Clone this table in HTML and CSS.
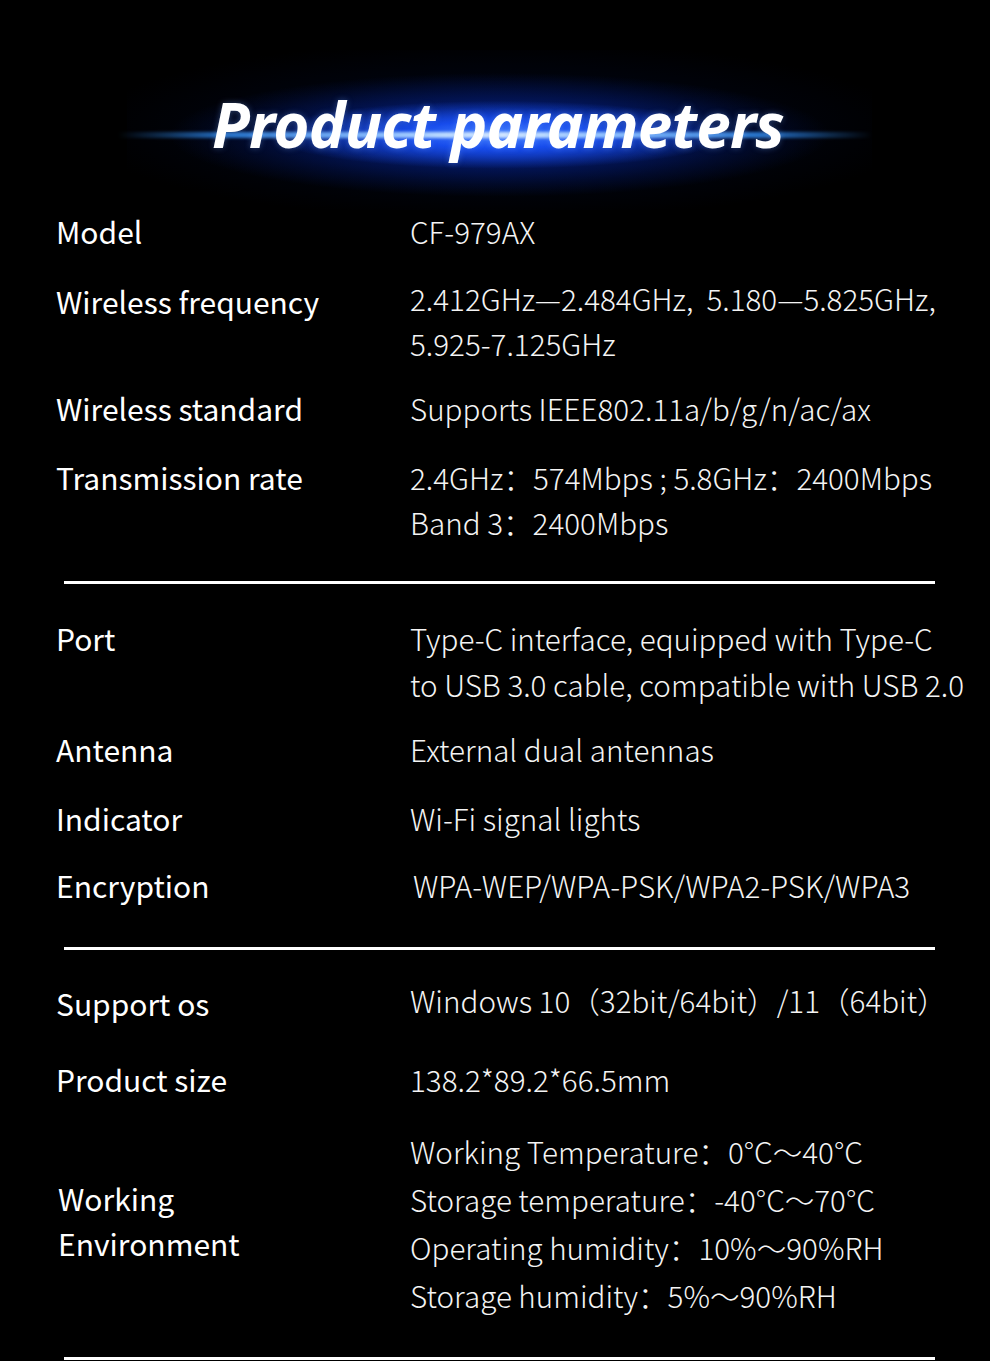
FILE: index.html
```html
<!DOCTYPE html>
<html lang="en">
<head>
<meta charset="utf-8">
<title>Product parameters</title>
<link rel="stylesheet" href="styles.css">
</head>
<body>
<div class="page">
  <header class="hero">
    <div class="hero-halo"></div>
    <div class="hero-streak"></div>
    <h1 class="hero-title">Product parameters</h1>
  </header>

  <section class="group group-1">
    <div class="row"><div class="label">Model</div><div class="value">CF-979AX</div></div>
    <div class="row row-freq"><div class="label">Wireless frequency</div><div class="value">2.412GHz—2.484GHz,&nbsp; 5.180—5.825GHz,<br>5.925-7.125GHz</div></div>
    <div class="row row-std"><div class="label">Wireless standard</div><div class="value">Supports IEEE802.11a/b/g/n/ac/ax</div></div>
    <div class="row row-rate"><div class="label">Transmission rate</div><div class="value">2.4GHz：574Mbps ; 5.8GHz：2400Mbps<br>Band 3：2400Mbps</div></div>
  </section>
  <div class="rule"></div>

  <section class="group group-2">
    <div class="row"><div class="label">Port</div><div class="value value-tall">Type-C interface, equipped with Type-C<br>to USB 3.0 cable, compatible with USB 2.0</div></div>
    <div class="row row-ant"><div class="label">Antenna</div><div class="value">External dual antennas</div></div>
    <div class="row row-ind"><div class="label">Indicator</div><div class="value">Wi-Fi signal lights</div></div>
    <div class="row"><div class="label">Encryption</div><div class="value value-enc">WPA-WEP/WPA-PSK/WPA2-PSK/WPA3</div></div>
  </section>
  <div class="rule"></div>

  <section class="group group-3">
    <div class="row"><div class="label label-down">Support os</div><div class="value">Windows 10（32bit/64bit）/11（64bit）</div></div>
    <div class="row"><div class="label">Product size</div><div class="value">138.2*89.2*66.5mm</div></div>
    <div class="row row-env"><div class="label">Working<br>Environment</div><div class="value value-env">Working Temperature：0°C～40°C<br>Storage temperature：-40°C～70°C<br>Operating humidity：10%～90%RH<br>Storage humidity：5%～90%RH</div></div>
  </section>
  <div class="rule"></div>
</div>
</body>
</html>
```

FILE: styles.css
```css
html, body {
  margin: 0;
  padding: 0;
  background: #000;
}

.page {
  width: 990px;
  min-height: 1361px;
  background: #000;
  color: #fff;
  font-family: "Noto Sans CJK SC", "Noto Sans", sans-serif;
  overflow: hidden;
}

.hero {
  position: relative;
  height: 198px;
  display: flex;
  align-items: flex-start;
  justify-content: center;
}

.hero-halo {
  position: absolute;
  left: 127px;
  top: 50px;
  width: 745px;
  height: 160px;
  background:
    radial-gradient(ellipse 230px 34px at 50% 53%, rgba(70, 130, 255, 1) 0%, rgba(25, 80, 245, 0.9) 40%, rgba(10, 45, 190, 0) 100%),
    radial-gradient(ellipse 330px 62px at 50% 53%, rgba(15, 60, 220, 0.85) 0%, rgba(5, 35, 150, 0.55) 45%, rgba(0, 15, 70, 0) 100%),
    radial-gradient(ellipse 420px 90px at 50% 50%, rgba(0, 25, 100, 0.55) 0%, rgba(0, 8, 35, 0.35) 60%, rgba(0, 0, 0, 0) 100%);
}

.hero-streak {
  position: absolute;
  left: 118px;
  top: 132px;
  width: 754px;
  height: 6px;
  border-radius: 3px;
  background: linear-gradient(90deg, rgba(40, 130, 255, 0) 0%, rgba(50, 150, 255, 0.75) 15%, rgba(150, 200, 255, 0.95) 35%, rgba(225, 240, 255, 1) 50%, rgba(150, 200, 255, 0.95) 65%, rgba(50, 150, 255, 0.75) 85%, rgba(40, 130, 255, 0) 100%);
  filter: blur(1.5px);
}

.hero-title {
  position: relative;
  margin: 84px 0 0 6px;
  font-family: "Noto Sans", "Open Sans", sans-serif;
  font-style: italic;
  font-weight: 700;
  font-size: 62px;
  line-height: 80px;
  letter-spacing: -0.8px;
  color: #fff;
  text-shadow: 0 0 6px rgba(120, 170, 255, 0.35);
}

.group {
  display: flex;
  flex-direction: column;
  padding-left: 56px;
}

.group-1 {
  gap: 22px;
  padding-top: 11px;
  padding-bottom: 36px;
}

.group-2 {
  gap: 22px;
  padding-top: 32px;
  padding-bottom: 39px;
}

.group-3 {
  gap: 31px;
  padding-top: 28px;
  padding-bottom: 37px;
}

.rule {
  width: 871px;
  height: 3px;
  margin-left: 64px;
  background: #fff;
}

.row {
  display: grid;
  grid-template-columns: 354px 1fr;
  align-items: start;
}

.row-std {
  margin-top: -2px;
}

.row-rate {
  margin-top: 2px;
}

.row-ant {
  margin-top: -3px;
}

.row-ind {
  margin-top: 2px;
}

.row-env {
  align-items: center;
  margin-top: -5px;
}

.row-env .label {
  margin-top: -6px;
  padding-left: 2px;
}

.label {
  font-size: 30px;
  font-weight: 400;
  line-height: 45px;
  color: #fff;
  white-space: nowrap;
}

.row-freq .label,
.label-down {
  padding-top: 3px;
}

.value {
  font-size: 29.6px;
  font-weight: 300;
  line-height: 45px;
  color: #f4f4f4;
  white-space: nowrap;
}

.value-tall {
  line-height: 46px;
}

.value-enc {
  padding-left: 3px;
}

.value-env {
  line-height: 48px;
}
```
